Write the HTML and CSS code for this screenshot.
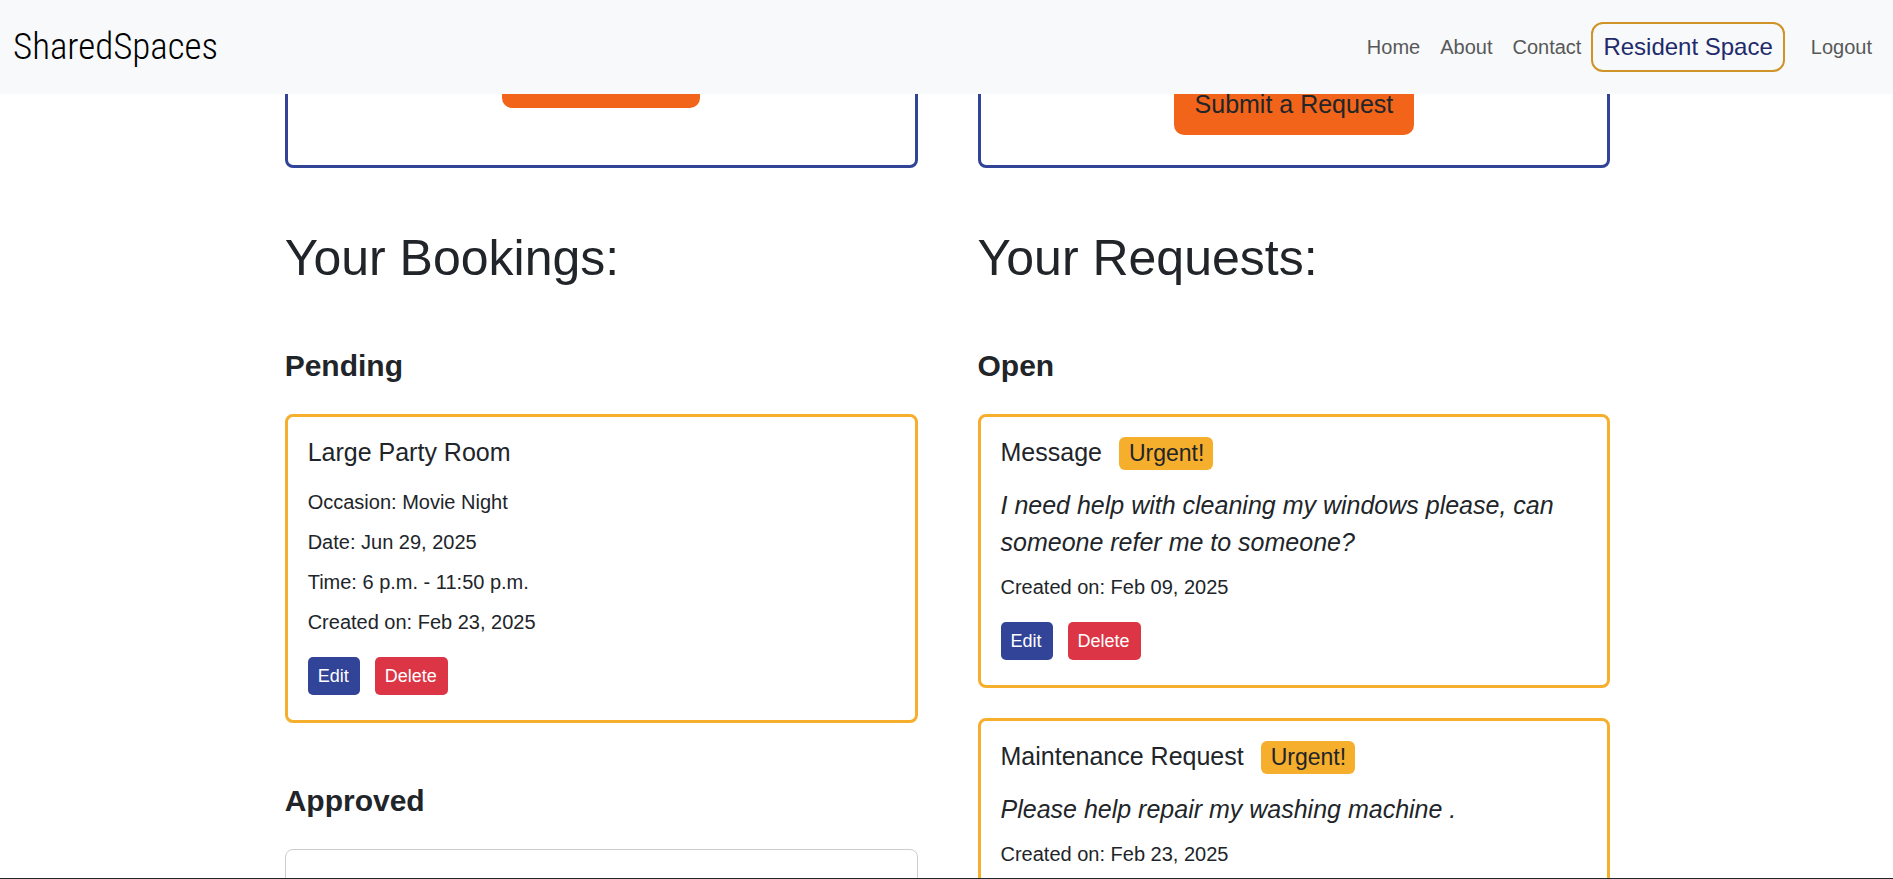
FILE: index.html
```html
<!DOCTYPE html>
<html lang="en">
<head>
  <meta charset="utf-8">
  <meta name="viewport" content="width=device-width, initial-scale=1">
  <title>SharedSpaces</title>
  <link rel="stylesheet" href="styles.css">
</head>
<body>
  <header class="navbar">
    <a class="brand" href="#">SharedSpaces</a>
    <nav class="nav" aria-label="Main">
      <a class="nav-link" href="#">Home</a>
      <a class="nav-link" href="#">About</a>
      <a class="nav-link" href="#">Contact</a>
      <a class="nav-link nav-link-current" href="#" aria-current="page">Resident Space</a>
      <a class="nav-link" href="#">Logout</a>
    </nav>
  </header>

  <main class="page">
    <div class="columns">
      <section class="column">
        <div class="action-card action-card-booking">
          <a class="action-button" href="#">Book a Space</a>
        </div>
        <h1 class="heading">Your Bookings:</h1>

        <h2 class="subheading">Pending</h2>
        <div class="card-list">
          <article class="card">
            <h3 class="card-title">Large Party Room</h3>
            <p class="card-text">Occasion: Movie Night</p>
            <p class="card-text">Date: Jun 29, 2025</p>
            <p class="card-text">Time: 6 p.m. - 11:50 p.m.</p>
            <p class="card-text">Created on: Feb 23, 2025</p>
            <div class="card-actions">
              <button class="button button-edit" type="button">Edit</button>
              <button class="button button-delete" type="button">Delete</button>
            </div>
          </article>
        </div>

        <h2 class="subheading">Approved</h2>
        <div class="card-list">
          <article class="card card-plain"></article>
        </div>
      </section>

      <section class="column">
        <div class="action-card">
          <a class="action-button" href="#">Submit a Request</a>
        </div>
        <h1 class="heading">Your Requests:</h1>

        <h2 class="subheading">Open</h2>
        <div class="card-list">
          <article class="card">
            <h3 class="card-title">Message <span class="badge">Urgent!</span></h3>
            <p class="card-message">I need help with cleaning my windows please, can someone refer me to someone?</p>
            <p class="card-text">Created on: Feb 09, 2025</p>
            <div class="card-actions">
              <button class="button button-edit" type="button">Edit</button>
              <button class="button button-delete" type="button">Delete</button>
            </div>
          </article>
          <article class="card">
            <h3 class="card-title">Maintenance Request <span class="badge">Urgent!</span></h3>
            <p class="card-message">Please help repair my washing machine .</p>
            <p class="card-text">Created on: Feb 23, 2025</p>
          </article>
        </div>
      </section>
    </div>
  </main>
</body>
</html>
```

FILE: styles.css
```css
* {
  box-sizing: border-box;
}

body {
  margin: 0;
  font-family: "Liberation Sans", Arial, sans-serif;
  font-size: 20px;
  line-height: 1.5;
  color: #212529;
  background: #fff;
}

h1,
h2,
h3,
p {
  margin: 0;
}

a {
  text-decoration: none;
}

.navbar {
  position: fixed;
  top: 0;
  left: 0;
  right: 0;
  z-index: 10;
  display: flex;
  align-items: center;
  justify-content: space-between;
  min-height: 94px;
  padding: 0 11px 0 13px;
  background: #f8f9fa;
}

.brand {
  font-family: "Liberation Sans Narrow", "Roboto Condensed", "Open Sans Condensed", Roboto, sans-serif;
  font-size: 37px;
  font-weight: 300;
  line-height: 48px;
  color: #000;
}

.nav {
  display: flex;
  align-items: center;
}

.nav-link {
  padding: 10px;
  color: #575859;
}

.nav-link-current {
  margin-right: 16px;
  padding: 5px 10px;
  border: 2px solid #cf9327;
  border-radius: 12px;
  font-size: 24px;
  color: #1f2b6b;
}

.page {
  height: 100vh;
  padding-left: 2px;
  overflow: hidden;
  border-bottom: 1px solid #212529;
}

.columns {
  display: grid;
  grid-template-columns: 1fr 1fr;
  gap: 60px;
  width: calc(70% + 2px);
  margin: 0 auto;
}

.action-card {
  display: flex;
  align-items: flex-end;
  justify-content: center;
  height: 168px;
  padding-bottom: 30px;
  border: 3px solid #314497;
  border-radius: 8px;
}

.action-card-booking {
  padding-bottom: 57px;
}

.action-button {
  padding: 12px 21px;
  border-radius: 10px;
  font-size: 25px;
  line-height: 38px;
  color: #212529;
  background: #f26419;
}

.heading {
  margin: 60px 0;
  font-size: 50px;
  font-weight: 400;
  line-height: 60px;
}

.subheading {
  margin-bottom: 30px;
  font-size: 30px;
  font-weight: 700;
  line-height: 36px;
}

.card-list {
  display: grid;
  gap: 30px;
  margin-bottom: 60px;
}

.card {
  padding: 21px 20px 25px;
  border: 3px solid #f6ae2d;
  border-radius: 8px;
}

.card-plain {
  min-height: 120px;
  border: 1px solid #cccdce;
}

.card-title {
  display: flex;
  align-items: center;
  gap: 17px;
  height: 30px;
  margin-bottom: 19px;
  font-size: 25px;
  font-weight: 400;
}

.badge {
  padding: 5px 9px 5px 10px;
  border-radius: 6px;
  font-size: 23px;
  line-height: 23px;
  background: #f6ae2d;
}

.card-message {
  margin-bottom: 11px;
  font-size: 25px;
  font-style: italic;
  line-height: 37px;
}

.card-text {
  margin-bottom: 10px;
}

.card-actions {
  display: flex;
  gap: 15px;
  margin-top: 20px;
}

.button {
  padding: 5px 11px 5px 10px;
  border: 0;
  border-radius: 5px;
  font-family: inherit;
  font-size: 18px;
  line-height: 28px;
  color: #fff;
}

.button-edit {
  background: #314497;
}

.button-delete {
  background: #dc3545;
}
```
